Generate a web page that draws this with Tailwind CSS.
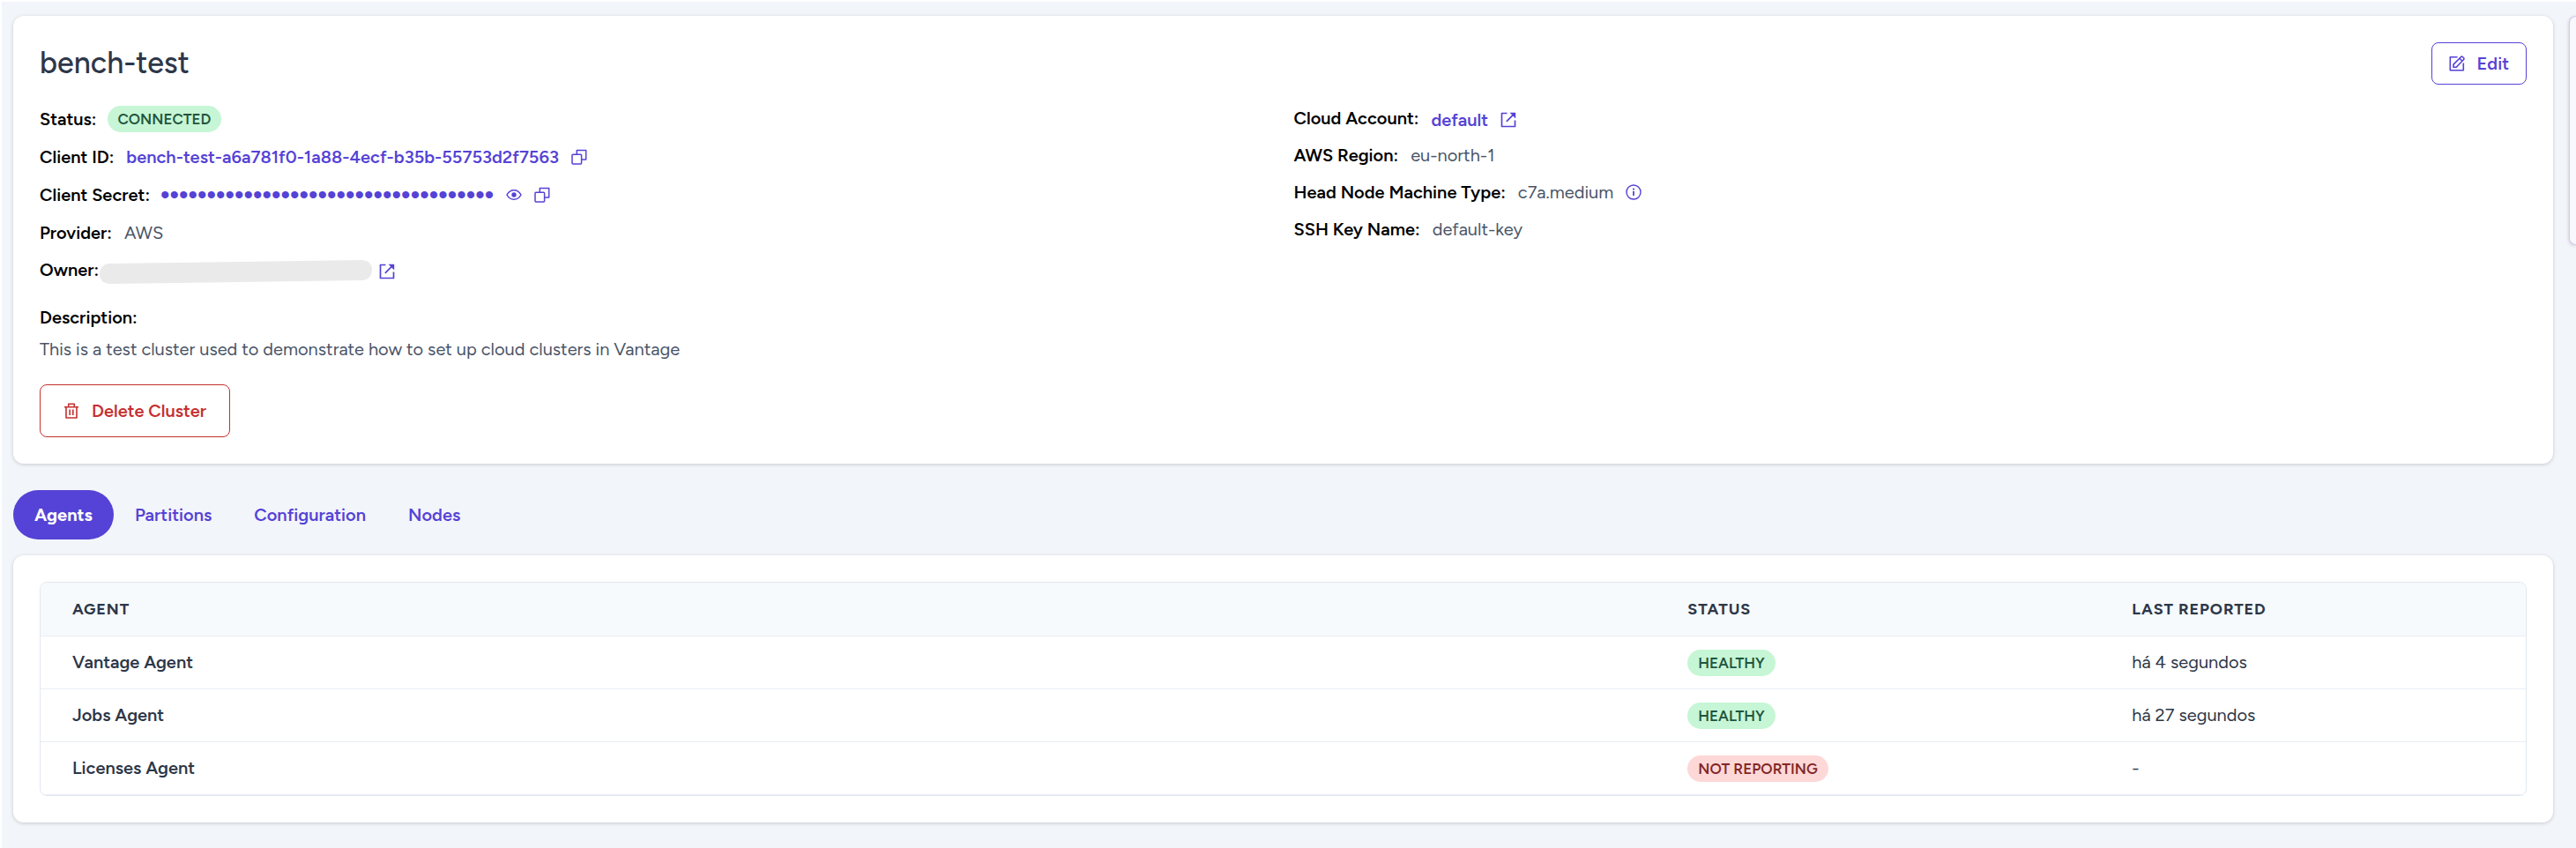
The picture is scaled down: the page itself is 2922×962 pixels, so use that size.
<!DOCTYPE html>
<html lang="en">
<head>
<meta charset="utf-8">
<title>bench-test</title>
<script src="https://cdn.jsdelivr.net/npm/@tailwindcss/browser@4"></script>
</head>
<body class="min-h-screen bg-white pl-0.5 pt-0.5 font-['Figtree','Open_Sans','Noto_Sans',sans-serif] text-[20px] leading-[28px] text-black">
<svg class="hidden" aria-hidden="true">
  <symbol id="copy" viewBox="0 0 18 18" fill="none" stroke="currentColor" stroke-width="1.500" stroke-linejoin="round"><path d="M6.300 6V1.600h10.400v10.400H12"/><rect x="1" y="6.300" width="10.600" height="10.600" rx=".8"/></symbol>
  <symbol id="ext" viewBox="0 0 18 18" fill="none" stroke="currentColor" stroke-width="1.700" stroke-linejoin="round"><path d="M7.500 1.500H1.500v15h15V9.500M6.800 10.800l8-8"/><path d="M10.500 .8h6.700v6.700z" fill="currentColor" stroke="none"/></symbol>
  <symbol id="eye" viewBox="0 0 18 18" fill="none" stroke="currentColor" stroke-width="1.500"><path d="M1 9c2-3.700 4.800-5.300 8-5.300s6 1.600 8 5.300c-2 3.700-4.800 5.300-8 5.300S3 12.700 1 9z"/><circle cx="9" cy="9" r="2.700" fill="currentColor" stroke="none"/></symbol>
  <symbol id="info" viewBox="0 0 18 18" fill="none" stroke="currentColor" stroke-width="1.400"><circle cx="9" cy="9" r="8"/><path d="M9 7.800V13" stroke-width="1.800"/><circle cx="9" cy="5.500" r="1.100" fill="currentColor" stroke="none"/></symbol>
  <symbol id="edit" viewBox="0 0 18 18" fill="none" stroke="currentColor" stroke-width="1.600" stroke-linejoin="round"><path d="M9.500 1.800H1.300v15h15V8.500"/><path d="M5 13.300v-3.200L13.600 1.500c.5-.5 1.200-.5 1.700 0l1.300 1.300c.5.500.5 1.200 0 1.700L8.200 13.300zM12 3.300l2.900 2.900"/></symbol>
  <symbol id="trash" viewBox="0 0 18 18" fill="none" stroke="currentColor" stroke-width="1.600" stroke-linejoin="round"><path d="M1 4.700h16M5.700 4.500V1.300h6.600v3.200M3 4.700V17h12V4.700M7.200 7.500v6.500M10.800 7.500v6.500"/></symbol>
</svg>
<div class="flex min-h-[calc(100vh-2px)] gap-[18px] bg-[#f2f5fa] pt-4 pl-[13px]">
  <main class="min-w-0 flex-1">
    <section class="rounded-xl bg-white p-[30px] shadow-[0_1px_4px_rgba(0,0,0,0.18)]">
      <div class="flex items-center justify-between">
        <h1 class="text-[34px] leading-[48px] font-medium text-[#2d3748]">bench-test</h1>
        <button class="flex h-12 items-center gap-[14px] rounded-lg border border-[#5542d6] px-[19px] font-semibold text-[#5542d6]"><svg class="size-[18px]"><use href="#edit"/></svg>Edit</button>
      </div>
      <div class="mt-6 grid grid-cols-2 gap-6">
        <dl class="flex flex-col gap-[14px]">
          <div class="flex items-center gap-3"><dt class="font-semibold">Status:</dt><dd class="rounded-full bg-[#c6f6d5] px-3 text-[17px] leading-[30px] font-semibold text-[#22543d]">CONNECTED</dd></div>
          <div class="flex items-center gap-[14px]"><dt class="font-semibold">Client ID:</dt><dd class="flex items-center gap-[14px] font-semibold text-[#5542d6]">bench-test-a6a781f0-1a88-4ecf-b35b-55753d2f7563<button aria-label="Copy client ID" class="block"><svg class="size-[18px]"><use href="#copy"/></svg></button></dd></div>
          <div class="flex items-center gap-3"><dt class="leading-[30px] font-semibold">Client Secret:</dt><dd class="flex items-center gap-[14px] text-[#5542d6]"><span class="font-['Liberation_Sans',sans-serif] text-[30px]">••••••••••••••••••••••••••••••••••••</span><button aria-label="Show client secret" class="block"><svg class="size-[18px]"><use href="#eye"/></svg></button><button aria-label="Copy client secret" class="block"><svg class="size-[18px]"><use href="#copy"/></svg></button></dd></div>
          <div class="flex items-center gap-[14px]"><dt class="font-semibold">Provider:</dt><dd class="text-[#4a5568]">AWS</dd></div>
          <div class="flex items-center"><dt class="font-semibold">Owner:</dt><dd class="flex h-7 items-center gap-2 pt-1 text-[#5542d6]"><svg class="h-7 w-[310px]" viewBox="0 0 310 28" fill="#eaeaea"><path d="M11 5 L299 1 Q310 2 310 12 Q309 23 300 24 L12 28 Q1 27 1 17 Q1 7 11 5z"/></svg><a href="#" aria-label="Open owner"><svg class="size-[18px]"><use href="#ext"/></svg></a></dd></div>
        </dl>
        <dl class="flex flex-col gap-[14px]">
          <div class="flex items-center gap-[14px]"><dt class="font-semibold">Cloud Account:</dt><dd class="font-semibold text-[#5542d6]"><a href="#" class="flex h-7 items-center gap-[14px] pt-1">default<svg class="size-[18px]"><use href="#ext"/></svg></a></dd></div>
          <div class="flex items-center gap-[14px]"><dt class="font-semibold">AWS Region:</dt><dd class="text-[#4a5568]">eu-north-1</dd></div>
          <div class="flex items-center gap-[14px]"><dt class="font-semibold">Head Node Machine Type:</dt><dd class="flex items-center gap-[14px] text-[#4a5568]">c7a.medium<button aria-label="Machine type details" class="block text-[#5542d6]"><svg class="size-[18px]"><use href="#info"/></svg></button></dd></div>
          <div class="flex items-center gap-[14px]"><dt class="font-semibold">SSH Key Name:</dt><dd class="text-[#4a5568]">default-key</dd></div>
        </dl>
      </div>
      <h2 class="mt-[26px] font-semibold">Description:</h2>
      <p class="mt-2 text-[#4a5568]">This is a test cluster used to demonstrate how to set up cloud clusters in Vantage</p>
      <button class="mt-[26px] flex h-[60px] items-center gap-[14px] rounded-lg border border-[#c53030] px-[26px] font-semibold text-[#c53030]"><svg class="size-[18px]"><use href="#trash"/></svg>Delete Cluster</button>
    </section>
    <nav class="mt-[30px] flex text-[#5542d6]">
      <a href="#" aria-current="page" class="rounded-full bg-[#5542d6] px-6 leading-[56px] font-bold text-white">Agents</a>
      <a href="#" class="px-6 leading-[56px] font-semibold">Partitions</a>
      <a href="#" class="px-6 leading-[56px] font-semibold">Configuration</a>
      <a href="#" class="px-6 leading-[56px] font-semibold">Nodes</a>
    </nav>
    <section class="mt-[18px] rounded-xl bg-white p-[30px] shadow-[0_1px_4px_rgba(0,0,0,0.18)]">
      <div class="overflow-hidden rounded-lg border border-[#e2e8f0]">
        <table class="w-full table-fixed text-left text-[#2d3748]">
          <thead class="bg-[#f6fafd] text-[18px] tracking-wider">
            <tr class="h-[60px] border-b border-[#e8eef4]"><th class="w-[65%] px-9 font-bold">AGENT</th><th class="w-[504px] px-9 font-bold">STATUS</th><th class="px-9 font-bold">LAST REPORTED</th></tr>
          </thead>
          <tbody>
            <tr class="h-[60px] border-b border-[#e8eef4]"><td class="px-9 font-semibold">Vantage Agent</td><td class="px-9"><span class="inline-block rounded-full bg-[#c6f6d5] px-3 align-middle text-[17px] leading-[30px] font-semibold text-[#22543d]">HEALTHY</span></td><td class="px-9">há 4 segundos</td></tr>
            <tr class="h-[60px] border-b border-[#e8eef4]"><td class="px-9 font-semibold">Jobs Agent</td><td class="px-9"><span class="inline-block rounded-full bg-[#c6f6d5] px-3 align-middle text-[17px] leading-[30px] font-semibold text-[#22543d]">HEALTHY</span></td><td class="px-9">há 27 segundos</td></tr>
            <tr class="h-[60px] border-b border-[#e8eef4]"><td class="px-9 font-semibold">Licenses Agent</td><td class="px-9"><span class="inline-block rounded-full bg-[#fed7d7] px-3 align-middle text-[17px] leading-[30px] font-semibold text-[#822727]">NOT REPORTING</span></td><td class="px-9">-</td></tr>
          </tbody>
        </table>
      </div>
    </section>
  </main>
  <aside class="h-[260px] w-2 rounded-l-lg border border-r-0 border-[#d3c9f0] bg-[#f8f7fe] shadow-[0_1px_4px_rgba(0,0,0,0.18)]"></aside>
</div>
</body>
</html>
